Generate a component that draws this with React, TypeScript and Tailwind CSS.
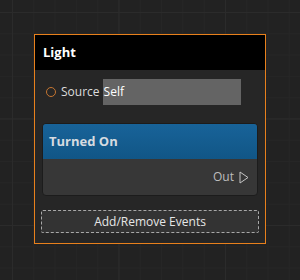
import React from 'react';

const OutArrow = () => (
  <svg width="10" height="13" viewBox="0 0 10 13" className="ml-[5px]">
    <path d="M1 1 L9 6.5 L1 12 Z" fill="none" stroke="#c4c4c4" strokeWidth="1" strokeLinejoin="round" />
  </svg>
);

export default function App() {
  return (
    <div
      className="w-[300px] h-[280px] pt-[34px] pl-[34px] bg-[#222222] [background-image:linear-gradient(#2b2b2b_1px,transparent_1px),linear-gradient(90deg,#2b2b2b_1px,transparent_1px),linear-gradient(#262626_1px,transparent_1px),linear-gradient(90deg,#262626_1px,transparent_1px)] [background-size:106.5px_106.5px,106.5px_106.5px,21.3px_21.3px,21.3px_21.3px] [background-position:12px_12px] font-['Open_Sans',sans-serif]"
    >
      <div className="w-[232px] h-[210px] border border-[#e8801c] bg-[#262626] flex flex-col">
        <div className="h-[35px] bg-black flex items-center px-[8px]">
          <span className="text-[13px] font-bold text-white">Light</span>
        </div>

        <div className="flex items-center mt-[9px] pl-[11px]">
          <span className="w-[10px] h-[10px] rounded-full border-[1.5px] border-[#c57530]" />
          <span className="ml-[5px] text-[12px] text-[#dcdcdc]">Source</span>
          <div className="ml-[3px] w-[138px] h-[26px] bg-[#646464] flex items-center px-[1px]">
            <span className="text-[12px] text-white">Self</span>
          </div>
        </div>

        <div className="ml-[7px] mr-[7px] mt-[18px] h-[73px] rounded-[4px] border border-[#1c1c1c] bg-[#373737] overflow-hidden flex flex-col">
          <div className="h-[35px] bg-gradient-to-b from-[#186399] to-[#115686] flex items-center px-[6px]">
            <span className="text-[13px] font-bold text-[#d6dbe0]">Turned On</span>
          </div>
          <div className="flex-1 flex items-center justify-end pr-[8px]">
            <span className="text-[12px] text-[#bdbdbd]">Out</span>
            <OutArrow />
          </div>
        </div>

        <div className="mx-[6px] mt-[14px] h-[23px] rounded-[2px] border border-dashed border-[#a8a8a8] bg-[#333333] flex items-center justify-center">
          <span className="text-[12px] text-[#e6e6e6]">Add/Remove Events</span>
        </div>
      </div>
    </div>
  );
}
